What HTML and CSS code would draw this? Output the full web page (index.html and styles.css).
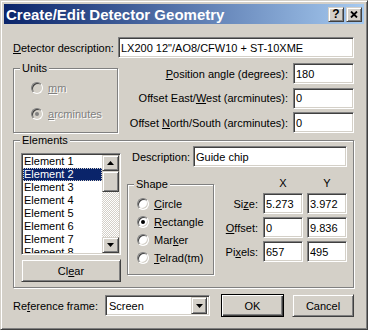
FILE: index.html
```html
<!DOCTYPE html>
<html lang="en">
<head>
    <meta charset="UTF-8">
    <title>Create/Edit Detector Geometry</title>
    <link rel="stylesheet" href="styles.css">
</head>
<body>
    <div class="window">
        <!-- title bar -->
        <div class="titlebar">
            <span class="title">Create/Edit Detector Geometry</span>
            <span class="cap-btn help">?</span>
            <span class="cap-btn">
                <svg width="8" height="7" viewBox="0 0 8 7"><path d="M1 0.5L7 6.5M7 0.5L1 6.5" stroke="#000" stroke-width="1.8"/></svg>
            </span>
        </div>

        <div class="client">
            <div class="desc-row">
                <label class="lbl"><u>D</u>etector description:</label>
                <input class="edit desc-edit" type="text" value='LX200 12"/AO8/CFW10 + ST-10XME'>
            </div>

            <div class="top-row">
                <div class="group units">
                    <div class="group-title">Units</div>
                    <div class="radio-list units-list">
                        <div class="radio disabled"><span class="radio-box"></span><span><u>m</u>m</span></div>
                        <div class="radio disabled"><span class="radio-box checked"><i></i></span><span><u>a</u>rcminutes</span></div>
                    </div>
                </div>
                <div class="offsets">
                    <label class="lbl right"><u>P</u>osition angle (degrees):</label>
                    <input class="edit" type="text" value="180">
                    <label class="lbl right">Offset East/<u>W</u>est (arcminutes):</label>
                    <input class="edit" type="text" value="0">
                    <label class="lbl right">Offset <u>N</u>orth/South (arcminutes):</label>
                    <input class="edit" type="text" value="0">
                </div>
            </div>

            <div class="group elements">
                <div class="group-title">Elements</div>
                <div class="el-body">
                    <div class="el-left">
                        <div class="listbox">
                            <div class="list-items">
                                <div class="item">Element 1</div>
                                <div class="item selected">Element 2</div>
                                <div class="item">Element 3</div>
                                <div class="item">Element 4</div>
                                <div class="item">Element 5</div>
                                <div class="item">Element 6</div>
                                <div class="item">Element 7</div>
                                <div class="item">Element 8</div>
                            </div>
                            <div class="vscroll">
                                <span class="sb-btn"><svg width="7" height="4" viewBox="0 0 7 4"><path d="M3.5 0L7 4H0z"/></svg></span>
                                <span class="sb-thumb"></span>
                                <span class="sb-track"></span>
                                <span class="sb-btn"><svg width="7" height="4" viewBox="0 0 7 4"><path d="M0 0h7L3.5 4z"/></svg></span>
                            </div>
                        </div>
                        <button class="btn clear-btn">Cl<u>e</u>ar</button>
                    </div>

                    <div class="el-right">
                        <div class="el-desc">
                            <label class="lbl">Description:</label>
                            <input class="edit el-desc-edit" type="text" value="Guide chip">
                        </div>
                        <div class="shape-row">
                            <div class="group shape">
                                <div class="group-title">Shape</div>
                                <div class="radio-list shape-list">
                                    <div class="radio"><span class="radio-box"></span><span><u>C</u>ircle</span></div>
                                    <div class="radio"><span class="radio-box checked"><i></i></span><span><u>R</u>ectangle</span></div>
                                    <div class="radio"><span class="radio-box"></span><span>Mar<u>k</u>er</span></div>
                                    <div class="radio"><span class="radio-box"></span><span><u>T</u>elrad(tm)</span></div>
                                </div>
                            </div>
                            <div class="xy-grid">
                                <span></span>
                                <span class="head">X</span>
                                <span class="head">Y</span>
                                <label class="lbl right">Si<u>z</u>e:</label>
                                <input class="edit" type="text" value="5.273">
                                <input class="edit" type="text" value="3.972">
                                <label class="lbl right"><u>O</u>ffset:</label>
                                <input class="edit" type="text" value="0">
                                <input class="edit" type="text" value="9.836">
                                <label class="lbl right">Pi<u>x</u>els:</label>
                                <input class="edit" type="text" value="657">
                                <input class="edit" type="text" value="495">
                            </div>
                        </div>
                    </div>
                </div>
            </div>

            <div class="bottom-row">
                <label class="lbl ref-lbl">Re<u>f</u>erence frame:</label>
                <div class="combo">
                    <span class="combo-text">Screen</span>
                    <span class="sb-btn"><svg width="7" height="4" viewBox="0 0 7 4"><path d="M0 0h7L3.5 4z"/></svg></span>
                </div>
                <button class="btn default ok-btn">OK</button>
                <button class="btn cancel-btn">Cancel</button>
            </div>
        </div>
    </div>
</body>
</html>
```

FILE: styles.css
```css
* {
    box-sizing: border-box;
}
body {
    margin: 0;
    font-family: "Liberation Sans", Arial, sans-serif;
    font-size: 11px;
    color: #000;
}
.window {
    width: 368px;
    height: 330px;
    display: flex;
    flex-direction: column;
    padding: 3px;
    background-color: #d4d0c8;
    border: 1px solid;
    border-color: #d4d0c8 #404040 #404040 #d4d0c8;
    box-shadow: inset 1px 1px #fff, inset -1px -1px #808080;
}

/* title bar */
.titlebar {
    height: 20px;
    display: flex;
    align-items: center;
    padding: 0 2px 0 2px;
    background: linear-gradient(to right, #0a246a, #a6caf0);
    color: white;
}
.title {
    flex: 1;
    font-weight: bold;
    font-size: 15px;
    white-space: nowrap;
}
.cap-btn {
    width: 16px;
    height: 15px;
    margin-left: 2px;
    display: flex;
    align-items: center;
    justify-content: center;
    font-weight: bold;
    font-size: 12px;
    color: #000;
}
.cap-btn, .sb-btn, .sb-thumb, .btn {
    background-color: #d4d0c8;
    border: 1px solid;
    border-color: #d4d0c8 #404040 #404040 #d4d0c8;
    box-shadow: inset 1px 1px #fff, inset -1px -1px #808080;
}

/* client area */
.client {
    flex: 1;
    padding: 13px 10px 0 9px;
}
.lbl {
    white-space: nowrap;
}
.lbl.right {
    text-align: right;
}
.edit {
    height: 21px;
    margin: 0;
    padding: 0 2px;
    font: inherit;
    color: #000;
    background: white;
    border: 1px solid;
    border-color: #808080 #fff #fff #808080;
    box-shadow: inset 1px 1px #404040, inset -1px -1px #d4d0c8;
    outline: none;
    min-width: 0;
}
.desc-row {
    display: flex;
    align-items: center;
}
.desc-edit {
    width: 236px;
    margin-left: auto;
}

.top-row {
    display: flex;
    margin-top: 5px;
}

/* group boxes */
.group {
    border: 1px solid #808080;
    box-shadow: inset 1px 1px #fff, 1px 1px #fff;
}
.group-title {
    width: fit-content;
    margin: -7px 0 0 6px;
    padding: 0 2px;
    line-height: 13px;
    background-color: #d4d0c8;
}
.units {
    width: 105px;
    margin-top: 5px;
    padding-bottom: 7px;
}
.radio-list {
    display: flex;
    flex-direction: column;
}
.units-list {
    gap: 13px;
    margin-top: 6px;
    padding-left: 17px;
}
.radio {
    height: 13px;
    display: flex;
    align-items: center;
    gap: 5px;
    white-space: nowrap;
}
.radio-box {
    width: 12px;
    height: 12px;
    border-radius: 50%;
    display: flex;
    align-items: center;
    justify-content: center;
    background: white;
    border: 1px solid;
    border-color: #808080 #fff #fff #808080;
    box-shadow: inset 1px 1px #404040, inset -1px -1px #d4d0c8;
}
.radio-box i {
    width: 4px;
    height: 4px;
    border-radius: 50%;
    background: #000;
}
.radio.disabled {
    color: #808080;
    text-shadow: 1px 1px #fff;
}
.radio.disabled .radio-box {
    background: #d4d0c8;
}
.radio.disabled .radio-box i {
    background: #808080;
}

.offsets {
    flex: 1;
    display: grid;
    grid-template-columns: 1fr 61px;
    column-gap: 5px;
    row-gap: 3.5px;
    align-items: center;
}

/* elements */
.elements {
    height: 148px;
    margin-top: 7px;
}
.el-body {
    display: flex;
    padding-left: 7px;
}
.el-left {
    width: 100px;
    margin-top: 6px;
}
.listbox {
    height: 102px;
    display: flex;
    background: white;
    border: 1px solid;
    border-color: #808080 #fff #fff #808080;
    box-shadow: inset 1px 1px #404040, inset -1px -1px #d4d0c8;
    padding: 1px;
}
.list-items {
    flex: 1;
    overflow: hidden;
}
.item {
    height: 13px;
    line-height: 13px;
    padding-left: 1px;
    white-space: nowrap;
}
.item.selected {
    background-color: #0a246a;
    color: white;
    outline: 1px dotted #d4d0c8;
    outline-offset: -1px;
}
.vscroll {
    width: 17px;
    display: flex;
    flex-direction: column;
    background: repeating-conic-gradient(#fff 0 25%, #d4d0c8 0 50%) 0 0 / 2px 2px;
}
.sb-btn {
    height: 16px;
    display: flex;
    align-items: center;
    justify-content: center;
    flex: none;
}
.sb-thumb {
    height: 21px;
    flex: none;
}
.sb-track {
    flex: 1;
}
.btn {
    height: 23px;
    padding: 0;
    font: inherit;
    color: #000;
}
.clear-btn {
    width: 100px;
    margin-top: 4px;
}

.el-right {
    width: 220px;
    margin: -1px 0 0 6px;
}
.el-desc {
    display: flex;
    align-items: center;
    padding-left: 5px;
}
.el-desc-edit {
    width: 154px;
    margin-left: auto;
}
.shape-row {
    display: flex;
    align-items: flex-start;
}
.shape {
    width: 87px;
    margin-top: 17px;
    padding-bottom: 10px;
}
.shape-list {
    gap: 5px;
    margin-top: 6px;
    padding-left: 9px;
}
.xy-grid {
    margin: 10px 0 0 auto;
    display: grid;
    grid-template-columns: auto 40px 40px;
    grid-template-rows: 13px 21px 21px 21px;
    column-gap: 4px;
    row-gap: 3px;
    align-items: center;
}
.xy-grid .lbl {
    padding-right: 1px;
}
.head {
    text-align: center;
    line-height: 13px;
}

/* bottom row */
.bottom-row {
    display: flex;
    align-items: center;
    margin-top: 6px;
}
.ref-lbl {
    width: 92px;
}
.combo {
    width: 105px;
    height: 21px;
    display: flex;
    align-items: center;
    padding: 2px;
    background: white;
    border: 1px solid;
    border-color: #808080 #fff #fff #808080;
    box-shadow: inset 1px 1px #404040, inset -1px -1px #d4d0c8;
}
.combo-text {
    flex: 1;
    padding-left: 1px;
}
.combo .sb-btn {
    width: 16px;
    height: 17px;
}
.ok-btn {
    width: 63px;
    margin-left: 11px;
}
.btn.default {
    border: 1px solid #000;
    box-shadow: inset 1px 1px #fff, inset -1px -1px #404040, inset -2px -2px #808080;
}
.cancel-btn {
    width: 62px;
    margin-left: 8px;
}
```
